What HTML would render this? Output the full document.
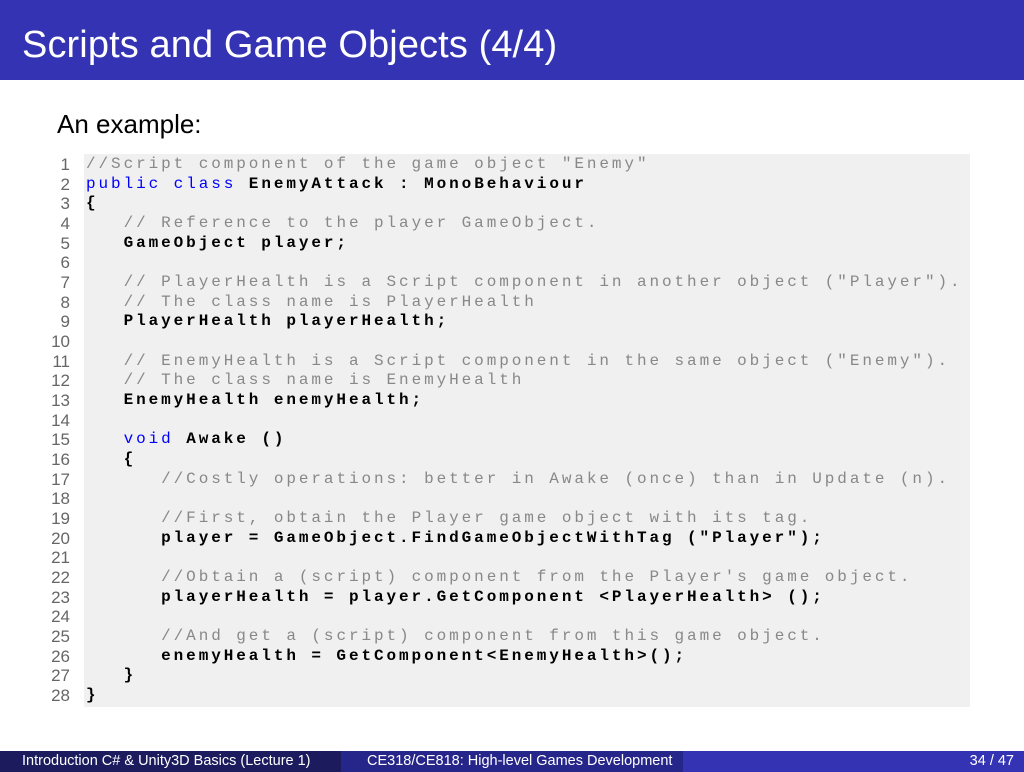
<!DOCTYPE html>
<html><head><meta charset="utf-8"><style>
body{margin:0;width:1024px;height:772px;position:relative;background:#fff;overflow:hidden;font-family:"Liberation Sans",sans-serif}
.title{position:absolute;left:0;top:0;width:1024px;height:80px;background:#3333b3}
.title span{position:absolute;left:22px;top:24px;color:#fff;font-size:38px;letter-spacing:0.1px}
.intro{position:absolute;left:57px;top:109px;font-size:26px;color:#000}
.code{position:absolute;left:84px;top:154px;width:886px;height:553px;background:#f0f0f0}
pre{margin:0;position:absolute;top:155px;font-family:"Liberation Mono",monospace;font-size:16px;line-height:19.67px;letter-spacing:2.4px;font-weight:bold;color:#000}
.src{letter-spacing:2.92px}
.nums{left:30px;width:40px;text-align:right;font-family:"Liberation Sans",sans-serif;font-weight:normal;color:#666;letter-spacing:0;font-size:17px}
.src{left:86px}
.c{color:#888;font-weight:normal}
.k{color:#0000ff;font-weight:normal}
.foot{position:absolute;top:751px;height:21px;color:#fff;font-size:14.5px;line-height:21px}
</style></head><body>
<div class="title"><span>Scripts and Game Objects (4/4)</span></div>
<div class="intro">An example:</div>
<div class="code"></div>
<pre class="nums">1
2
3
4
5
6
7
8
9
10
11
12
13
14
15
16
17
18
19
20
21
22
23
24
25
26
27
28</pre>
<pre class="src"><span class="c">//Script component of the game object "Enemy"</span>
<span class="k">public</span> <span class="k">class</span> EnemyAttack : MonoBehaviour
{
   <span class="c">// Reference to the player GameObject.</span>
   GameObject player;

   <span class="c">// PlayerHealth is a Script component in another object ("Player").</span>
   <span class="c">// The class name is PlayerHealth</span>
   PlayerHealth playerHealth;

   <span class="c">// EnemyHealth is a Script component in the same object ("Enemy").</span>
   <span class="c">// The class name is EnemyHealth</span>
   EnemyHealth enemyHealth;

   <span class="k">void</span> Awake ()
   {
      <span class="c">//Costly operations: better in Awake (once) than in Update (n).</span>

      <span class="c">//First, obtain the Player game object with its tag.</span>
      player = GameObject.FindGameObjectWithTag ("Player");

      <span class="c">//Obtain a (script) component from the Player's game object.</span>
      playerHealth = player.GetComponent &lt;PlayerHealth&gt; ();

      <span class="c">//And get a (script) component from this game object.</span>
      enemyHealth = GetComponent&lt;EnemyHealth&gt;();
   }
}</pre>
<div class="foot" style="left:0;width:341px;background:#1b1b5e"><span style="padding-left:22px">Introduction C# &amp; Unity3D Basics (Lecture 1)</span></div>
<div class="foot" style="left:341px;width:342px;background:#26268a"><span style="padding-left:26px">CE318/CE818: High-level Games Development</span></div>
<div class="foot" style="left:683px;width:341px;background:#3333b3;text-align:right"><span style="padding-right:10px">34 / 47</span></div>
</body></html>
